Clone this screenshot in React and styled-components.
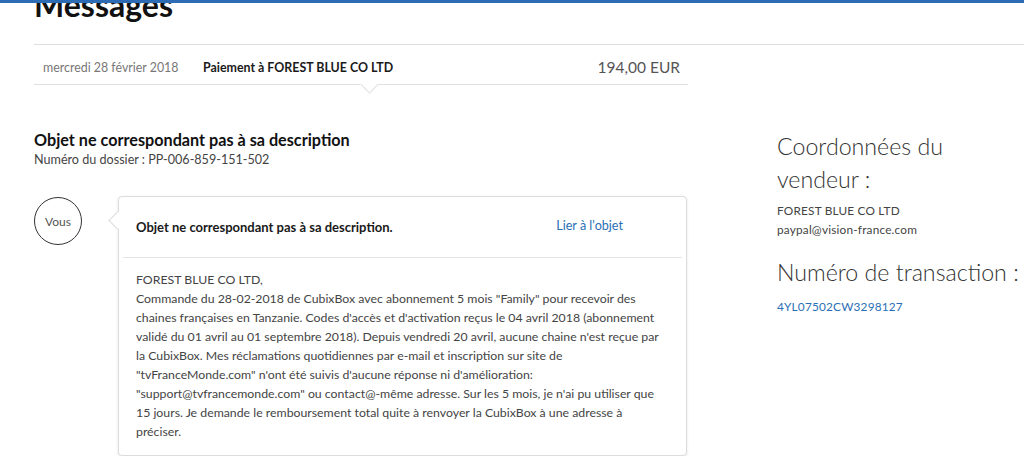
import styled, { createGlobalStyle } from "styled-components";

const GlobalStyle = createGlobalStyle`
  body {
    margin: 0;
    background: #ffffff;
    font-family: Lato, "Liberation Sans", sans-serif;
    overflow: hidden;
  }
`;

// barre bleue du haut, fixée par-dessus le contenu
const TopBar = styled.div`
  position: fixed;
  top: 0;
  left: 0;
  right: 0;
  height: 3px;
  background: #2d6cb5;
  z-index: 5;
`;

const Page = styled.div`
  padding-left: 34px;
`;

const PageHeader = styled.div`
  display: flex;
  height: 44px;
  border-bottom: 1px solid #dedede;
`;

const PageTitle = styled.h1`
  margin: -11px 0 0;
  font-size: 32px;
  line-height: 32px;
  font-weight: 700;
  color: #111;
`;

const TxRow = styled.div`
  position: relative;
  box-sizing: border-box;
  display: flex;
  align-items: center;
  width: 654px;
  height: 40px;
  padding: 5px 8px 0 9px;
  border-bottom: 1px solid #e0e0e0;

  &::after {
    content: "";
    position: absolute;
    left: 329px;
    bottom: -7px;
    width: 12px;
    height: 12px;
    background: #fff;
    border-right: 1px solid #e0e0e0;
    border-bottom: 1px solid #e0e0e0;
    transform: rotate(45deg);
  }
`;

const TxDate = styled.span`
  width: 160px;
  font-size: 12.4px;
  color: #777;
`;

const TxPayee = styled.span`
  flex: 1;
  font-size: 12.4px;
  font-weight: 700;
  color: #1a1a1a;
`;

const TxAmount = styled.span`
  font-size: 15.5px;
  color: #555;
`;

const Columns = styled.div`
  display: flex;
  padding-top: 45px;
`;

const MainColumn = styled.div`
  width: 654px;
`;

const CaseTitle = styled.h2`
  margin: 0;
  font-size: 16.2px;
  line-height: 20px;
  font-weight: 700;
  color: #111;
`;

const CaseNumber = styled.div`
  font-size: 12.6px;
  line-height: 20px;
  color: #444;
`;

const Thread = styled.div`
  display: flex;
  align-items: flex-start;
  margin-top: 26px;
`;

const Avatar = styled.div`
  flex: none;
  display: flex;
  align-items: center;
  justify-content: center;
  width: 46px;
  height: 46px;
  margin-top: 1px;
  border: 1.5px solid #333;
  border-radius: 50%;
  font-size: 12px;
  color: #555;
`;

const Card = styled.div`
  position: relative;
  width: 567px;
  margin-left: 36px;
  background: #fff;
  border: 1px solid #dcdcdc;
  border-radius: 4px;
  box-shadow: 0 1px 3px rgba(0, 0, 0, 0.1);

  &::before {
    content: "";
    position: absolute;
    left: -8px;
    top: 17px;
    width: 12px;
    height: 12px;
    background: #fff;
    border-left: 1px solid #dcdcdc;
    border-bottom: 1px solid #dcdcdc;
    transform: rotate(45deg);
  }
`;

const CardHeader = styled.div`
  display: flex;
  align-items: center;
  justify-content: space-between;
  height: 60px;
  padding: 0 63px 0 17px;
`;

const CardTitle = styled.span`
  font-size: 13px;
  font-weight: 700;
  color: #1a1a1a;
`;

const Link = styled.a`
  margin-bottom: 4px;
  font-size: 12.6px;
  color: #2a6fb5;
  text-decoration: none;
  cursor: pointer;
`;

const Divider = styled.div`
  margin: 0 4px;
  border-top: 1px solid #e4e4e4;
`;

const CardBody = styled.div`
  padding: 12px 18px 14px 17px;
  font-size: 12.3px;
  line-height: 19px;
  color: #444;
`;

const SideColumn = styled.div`
  margin-left: 89px;
`;

const SideHeading = styled.h3`
  margin: ${(p) => p.$top || 0}px 0 0;
  font-size: 23.2px;
  line-height: 33px;
  font-weight: 300;
  color: #333;
  white-space: nowrap;
`;

const SideText = styled.div`
  margin-top: ${(p) => p.$top || 0}px;
  font-size: 11.8px;
  line-height: 19px;
  letter-spacing: 0.2px;
  color: ${(p) => (p.$link ? "#2a6fb5" : "#444")};
`;

const messageLines = [
  "FOREST BLUE CO LTD,",
  'Commande du 28-02-2018 de CubixBox avec abonnement 5 mois "Family" pour recevoir des',
  "chaines françaises en Tanzanie. Codes d'accès et d'activation reçus le 04 avril 2018 (abonnement",
  "validé du 01 avril au 01 septembre 2018). Depuis vendredi 20 avril, aucune chaine n'est reçue par",
  "la CubixBox. Mes réclamations quotidiennes par e-mail et inscription sur site de",
  '"tvFranceMonde.com" n\'ont été suivis d\'aucune réponse ni d\'amélioration:',
  '"support@tvfrancemonde.com" ou contact@-même adresse. Sur les 5 mois, je n\'ai pu utiliser que',
  "15 jours. Je demande le remboursement total quite à renvoyer la CubixBox à une adresse à",
  "préciser.",
];

export default function App() {
  return (
    <>
      <GlobalStyle />
      <TopBar />
      <Page>
        <PageHeader>
          <PageTitle>Messages</PageTitle>
        </PageHeader>

        <TxRow>
          <TxDate>mercredi 28 février 2018</TxDate>
          <TxPayee>Paiement à FOREST BLUE CO LTD</TxPayee>
          <TxAmount>194,00 EUR</TxAmount>
        </TxRow>

        <Columns>
          <MainColumn>
            <CaseTitle>Objet ne correspondant pas à sa description</CaseTitle>
            <CaseNumber>Numéro du dossier : PP-006-859-151-502</CaseNumber>

            <Thread>
              <Avatar>Vous</Avatar>
              <Card>
                <CardHeader>
                  <CardTitle>Objet ne correspondant pas à sa description.</CardTitle>
                  <Link>Lier à l'objet</Link>
                </CardHeader>
                <Divider />
                <CardBody>
                  {messageLines.map((line, i) => (
                    <div key={i}>{line}</div>
                  ))}
                </CardBody>
              </Card>
            </Thread>
          </MainColumn>

          <SideColumn>
            <SideHeading>
              Coordonnées du
              <br />
              vendeur :
            </SideHeading>
            <SideText $top={5}>FOREST BLUE CO LTD</SideText>
            <SideText>paypal@vision-france.com</SideText>
            <SideHeading $top={17}>Numéro de transaction :</SideHeading>
            <SideText $top={8} $link>
              4YL07502CW3298127
            </SideText>
          </SideColumn>
        </Columns>
      </Page>
    </>
  );
}
